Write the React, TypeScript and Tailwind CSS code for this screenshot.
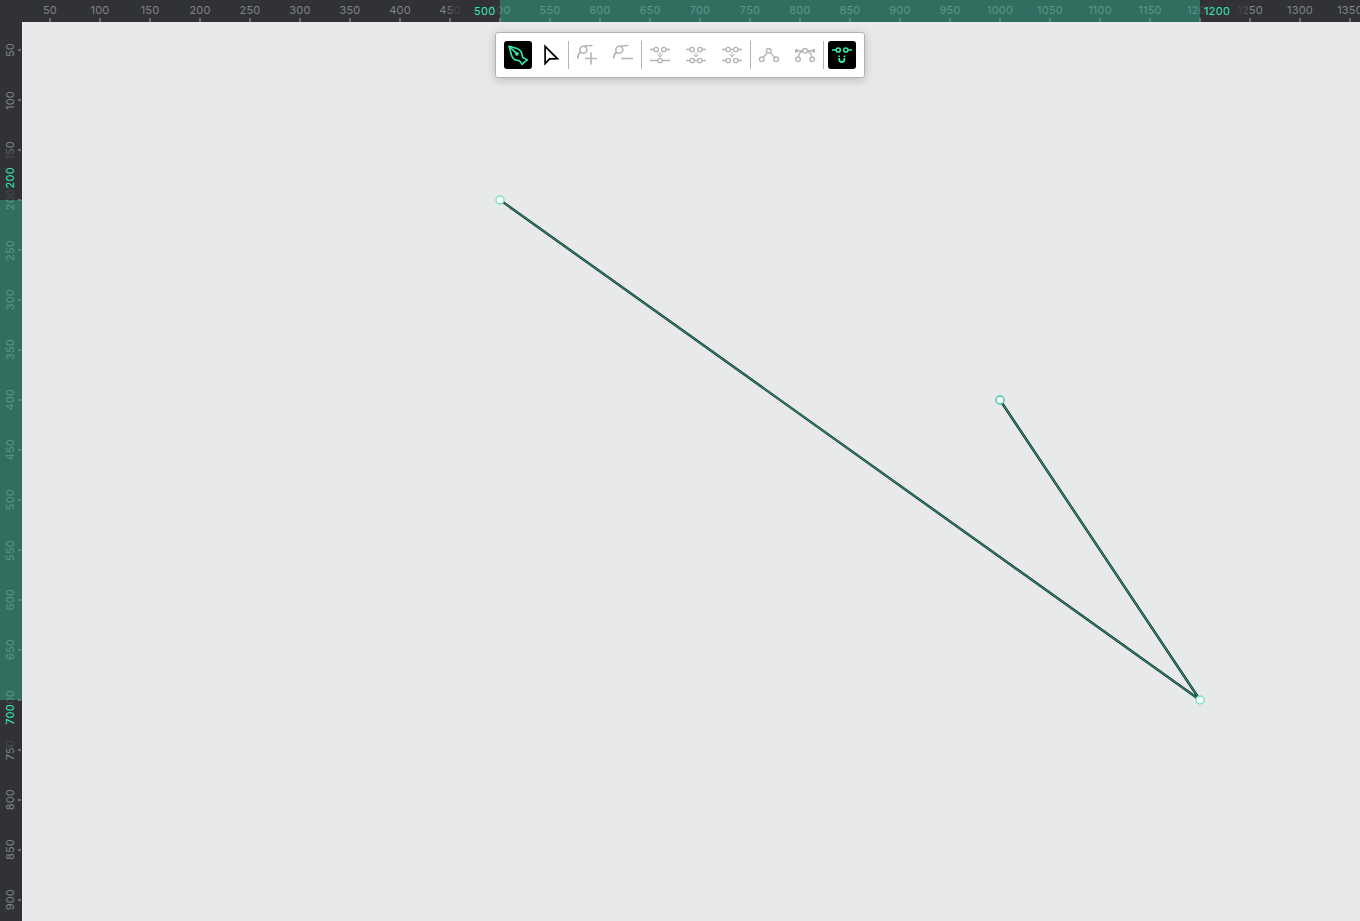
import type { ReactNode } from "react";

const STEPS = Array.from({ length: 27 }, (_, i) => (i + 1) * 50);
const V_STEPS = STEPS.slice(0, 18);

function HorizontalRuler() {
  return (
    <div className="relative h-[22px] flex-1 overflow-hidden bg-[#303236]">
      <div className="flex h-full w-[1353px] pl-[3px]">
        {STEPS.map((n) => (
          <div key={n} className="flex h-full w-[50px] shrink-0 flex-col items-center justify-between">
            <span className="pt-[3px] text-[11px] leading-[15px] tracking-[0.2px] text-[#828488]">{n}</span>
            <span className="h-1 w-[2px] bg-[#6c6e72]" />
          </div>
        ))}
      </div>
      <div className="absolute top-0 left-[425px] h-[16px] w-[53px] bg-linear-to-r from-[#303236]/0 to-[#303236]/75 to-15%" />
      <div className="absolute top-0 left-[1178px] h-[16px] w-[50px] bg-linear-to-r from-[#303236]/75 from-90% to-[#303236]/0" />
      <div className="absolute top-0 left-[478px] h-full w-[700px] bg-[#32aa8a]/50" />
      <span className="absolute top-[4px] left-[452px] text-[11px] leading-[15px] tracking-[0.3px] text-[#33eab1]">500</span>
      <span className="absolute top-[4px] left-[1182px] text-[11px] leading-[15px] tracking-[0.3px] text-[#33eab1]">1200</span>
    </div>
  );
}

function VerticalRuler() {
  return (
    <div className="relative w-[22px] shrink-0 overflow-hidden bg-[#303236]">
      <div className="flex h-[903px] flex-col pt-[3px]">
        {V_STEPS.map((n) => (
          <div key={n} className="flex h-[50px] shrink-0 items-center justify-between">
            <span className="ml-[3px] rotate-180 text-[11px] leading-[15px] tracking-[0.2px] text-[#828488] [writing-mode:vertical-rl]">{n}</span>
            <span className="mr-px h-[2px] w-1 bg-[#6c6e72]" />
          </div>
        ))}
      </div>
      <div className="absolute top-[125px] left-0 h-[53px] w-[16px] bg-linear-to-b from-[#303236]/0 to-[#303236]/75 to-15%" />
      <div className="absolute top-[678px] left-0 h-[50px] w-[16px] bg-linear-to-b from-[#303236]/75 from-90% to-[#303236]/0" />
      <div className="absolute top-[178px] left-0 h-[500px] w-full bg-[#32aa8a]/50" />
      <span className="absolute top-[145px] left-[3px] rotate-180 text-[11px] leading-[15px] tracking-[0.3px] text-[#33eab1] [writing-mode:vertical-rl]">200</span>
      <span className="absolute top-[682px] left-[3px] rotate-180 text-[11px] leading-[15px] tracking-[0.3px] text-[#33eab1] [writing-mode:vertical-rl]">700</span>
    </div>
  );
}

function Tool({ active = false, children }: { active?: boolean; children: ReactNode }) {
  return (
    <button
      className={
        active
          ? "flex size-7 shrink-0 items-center justify-center rounded-[3px] bg-black text-[#33eab1]"
          : "flex size-7 shrink-0 items-center justify-center text-[#b4b5b7]"
      }
    >
      <svg width="28" height="28" viewBox="0 0 28 28" fill="none" stroke="currentColor" strokeWidth="1.3">
        {children}
      </svg>
    </button>
  );
}

function Divider() {
  return <div className="h-7 w-px shrink-0 bg-[#b4b5b7]" />;
}

const ARROW = "M14 11v5M11.3 13.2l2.7 2.6l2.7-2.6";
const HANDLE = "M4.6 17.5C4.8 14.5 5.5 12.6 7.6 11M11.2 5.4C13.5 4.7 16 4.5 19.5 4.5";

function Toolbar() {
  return (
    <div className="flex h-[46px] w-[370px] items-center rounded-[3px] border border-[#b0b1b3] bg-white pl-2 shadow-[0_2px_10px_rgba(0,0,0,0.2)]">
      <Tool active>
        <g strokeWidth="1.6" strokeLinejoin="round">
          <path d="M5.1 5.2L13 7.4C16.9 8.8 17.8 11.3 18.1 14.3C18.3 16.1 18.8 16.8 20 17.1L23.2 18.8L18 23.4L16.4 20.9C15.7 19.8 14.9 19.5 13.5 19.4C10.2 19.1 8.4 17.1 7.5 14.3Z" />
          <path d="M5.1 5.2L12.5 12.4" />
        </g>
        <circle cx="12.9" cy="12.8" r="1.9" fill="currentColor" stroke="none" />
      </Tool>
      <div className="mr-[3px] ml-[5px] flex">
        <Tool>
          <path d="M8.1 5.3V22.6L12.6 17.9L20.5 17.8Z" stroke="#000" strokeWidth="1.7" />
        </Tool>
      </div>
      <Divider />
      <div className="ml-1 flex gap-2">
        <Tool>
          <g strokeWidth="1.6">
            <circle cx="10.3" cy="8.8" r="3.5" />
            <path d={HANDLE} />
            <path d="M12 17.5H24M18 11.5V23.5" />
          </g>
        </Tool>
        <Tool>
          <g strokeWidth="1.6">
            <circle cx="10.3" cy="8.8" r="3.5" />
            <path d={HANDLE} />
            <path d="M12 17.5H24" />
          </g>
        </Tool>
      </div>
      <div className="ml-1 flex"><Divider /></div>
      <div className="ml-1 flex gap-2">
        <Tool>
          <circle cx="10.2" cy="8.5" r="2.2" /><circle cx="17.8" cy="8.5" r="2.2" /><circle cx="14" cy="19.5" r="2.2" />
          <path d="M4 8.5H8M20 8.5H24M4 19.5H11.8M16.2 19.5H24" /><path d={ARROW} strokeWidth="1" />
        </Tool>
        <Tool>
          <circle cx="10.2" cy="8.5" r="2.2" /><circle cx="17.8" cy="8.5" r="2.2" />
          <circle cx="10.2" cy="19.5" r="2.2" /><circle cx="17.8" cy="19.5" r="2.2" />
          <path d="M4 8.5H8M20 8.5H24M4 19.5H8M12.3 19.5H15.7M20 19.5H24" /><path d={ARROW} strokeWidth="1" />
        </Tool>
        <Tool>
          <circle cx="10.2" cy="8.5" r="2.2" /><circle cx="17.8" cy="8.5" r="2.2" />
          <circle cx="10.2" cy="19.5" r="2.2" /><circle cx="17.8" cy="19.5" r="2.2" />
          <path d="M4 8.5H8M12.3 8.5H15.7M20 8.5H24M4 19.5H8M20 19.5H24" /><path d={ARROW} strokeWidth="1" />
        </Tool>
      </div>
      <div className="ml-1 flex"><Divider /></div>
      <div className="ml-1 flex gap-2">
        <Tool>
          <g strokeWidth="1.4">
            <circle cx="13.7" cy="9.8" r="2.3" /><circle cx="6.7" cy="18.3" r="2.3" /><circle cx="21.2" cy="18.3" r="2.3" />
            <path d="M12.2 11.6L8.2 16.6M15.2 11.6L19.7 16.6" />
          </g>
        </Tool>
        <Tool>
          <g strokeWidth="1.4">
            <circle cx="14" cy="9.8" r="2.3" /><circle cx="7" cy="18.3" r="2.3" /><circle cx="21.2" cy="18.3" r="2.3" />
            <path d="M6 9.8H11.7M16.3 9.8H22M11.8 10.3C9 11 7.7 13 7.4 16M16.2 10.3C19 11 20.3 13 20.8 16" />
          </g>
          <path d="M4 8.2h3v3.2H4zM21 8.2h3v3.2h-3z" fill="currentColor" stroke="none" />
        </Tool>
      </div>
      <div className="ml-1 flex"><Divider /></div>
      <div className="ml-1 flex">
        <Tool active>
          <g strokeWidth="1.5">
            <circle cx="10.2" cy="9" r="2.1" /><circle cx="17.8" cy="9" r="2.1" />
            <path d="M4 9H8M20 9H24" />
            <path d="M11.2 17V18.4A2.6 2.6 0 0 0 16.4 18.4V17M11.2 14.6V15.9M16.4 14.6V15.9" strokeWidth="1.8" />
          </g>
        </Tool>
      </div>
    </div>
  );
}

function Canvas() {
  return (
    <main className="relative flex flex-1 justify-center bg-[#e7e9eb]">
      <svg className="absolute inset-0" width="1338" height="899" viewBox="22 22 1338 899" fill="none">
        <path d="M500 200L1200 700L1000 400" stroke="#202225" strokeWidth="2.4" />
        <path d="M500 200L1200 700L1000 400" stroke="#18b985" strokeWidth="1" />
        <g fill="#fff" stroke="#70e5c1" strokeWidth="1.4">
          <circle cx="500" cy="200" r="4" />
          <circle cx="1200" cy="700" r="4" />
          <circle cx="1000" cy="400" r="4" stroke="#3fc6a6" />
        </g>
      </svg>
      <div className="relative mt-[10px] mr-[22px] h-[46px]">
        <Toolbar />
      </div>
    </main>
  );
}

export default function App() {
  return (
    <div className="flex h-[921px] w-[1360px] flex-col overflow-hidden bg-[#303236] font-['Inter',sans-serif]">
      <header className="flex h-[22px] shrink-0">
        <div className="w-[22px] shrink-0" />
        <HorizontalRuler />
      </header>
      <div className="flex min-h-0 flex-1">
        <VerticalRuler />
        <Canvas />
      </div>
    </div>
  );
}
